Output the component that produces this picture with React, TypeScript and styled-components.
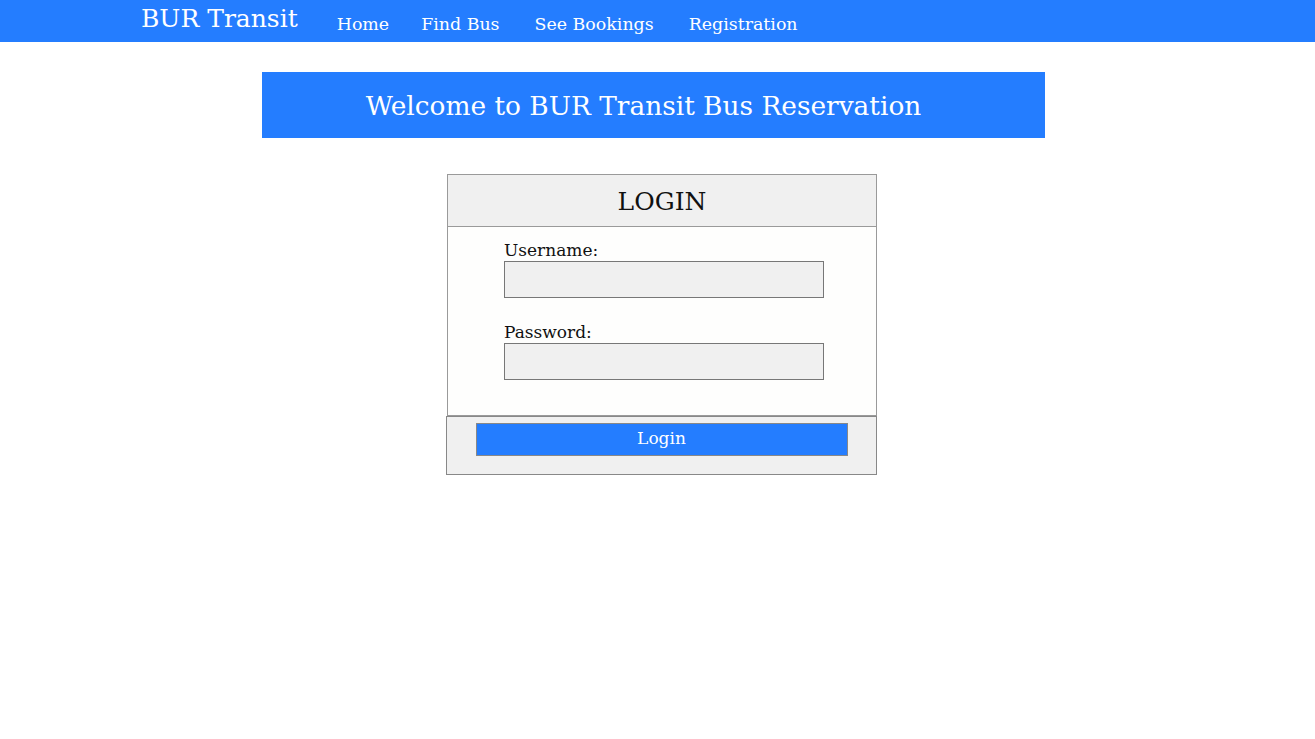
import React from "react";
import styled, { createGlobalStyle } from "styled-components";

const Global = createGlobalStyle`
  html, body { margin: 0; padding: 0; background: #ffffff; }
  body { font-family: "DejaVu Serif", "Liberation Serif", serif; }
  * { box-sizing: border-box; }
`;

const BLUE = "#247dff";

const NavBar = styled.nav`
  height: 42px;
  background: ${BLUE};
  display: flex;
  align-items: flex-start;
  padding-left: 141px;
`;

const Brand = styled.a`
  color: #fff;
  font-size: 25px;
  line-height: 38px;
  text-decoration: none;
  margin-right: 39px;
`;

const NavLinks = styled.ul`
  list-style: none;
  margin: 0;
  padding: 0;
  display: flex;
  padding-top: 10px;
`;

const NavItem = styled.li<{ $gap: number }>`
  margin-right: ${(p) => p.$gap}px;
`;

const NavLink = styled.a`
  color: #fff;
  font-size: 17.4px;
  line-height: 28px;
  text-decoration: none;
`;

const Main = styled.main`
  display: flex;
  flex-direction: column;
  align-items: flex-start;
  padding-top: 30px;
`;

const Banner = styled.h1`
  margin: 0 0 36px 262px;
  width: 783px;
  height: 66px;
  background: ${BLUE};
  color: #fff;
  font-weight: normal;
  font-size: 26.4px;
  display: flex;
  align-items: center;
  justify-content: center;
  padding-right: 20px;
`;

const Card = styled.form`
  width: 430px;
  margin-left: 447px;
  display: flex;
  flex-direction: column;
`;

const CardHeader = styled.div`
  height: 53px;
  background: #f0f0f0;
  border: 1px solid #9a9a9a;
  display: flex;
  align-items: center;
  justify-content: center;
  font-size: 25px;
  color: #111;
  padding-top: 2px;
`;

const CardBody = styled.div`
  background: #fefefd;
  border: 1px solid #9a9a9a;
  border-top: none;
  padding: 12px 0 35px 56px;
  display: flex;
  flex-direction: column;
`;

const Label = styled.label<{ $top: number }>`
  font-size: 17px;
  line-height: 22px;
  color: #111;
  margin-top: ${(p) => p.$top}px;
`;

const Input = styled.input`
  width: 320px;
  height: 37px;
  background: #f0f0f0;
  border: 1px solid #777;
  margin: 0;
`;

const CardFooter = styled.div`
  height: 59px;
  background: #f0f0f0;
  border: 1px solid #888;
  margin-left: -1px;
  display: flex;
  justify-content: center;
  padding-top: 6px;
`;

const Button = styled.button`
  width: 372px;
  height: 33px;
  background: ${BLUE};
  color: #fff;
  border: 1px solid #888;
  font-family: inherit;
  font-size: 17px;
  padding: 0 0 3px 0;
`;

export default function App() {
  return (
    <>
      <Global />
      <NavBar>
        <Brand href="#">BUR Transit</Brand>
        <NavLinks>
          <NavItem $gap={32}><NavLink href="#">Home</NavLink></NavItem>
          <NavItem $gap={35}><NavLink href="#">Find Bus</NavLink></NavItem>
          <NavItem $gap={35}><NavLink href="#">See Bookings</NavLink></NavItem>
          <NavItem $gap={0}><NavLink href="#">Registration</NavLink></NavItem>
        </NavLinks>
      </NavBar>
      <Main>
        <Banner>Welcome to BUR Transit Bus Reservation</Banner>
        <Card onSubmit={(e) => e.preventDefault()}>
          <CardHeader>LOGIN</CardHeader>
          <CardBody>
            <Label $top={0}>Username:</Label>
            <Input type="text" />
            <Label $top={23}>Password:</Label>
            <Input type="password" />
          </CardBody>
          <CardFooter>
            <Button type="submit">Login</Button>
          </CardFooter>
        </Card>
      </Main>
    </>
  );
}
